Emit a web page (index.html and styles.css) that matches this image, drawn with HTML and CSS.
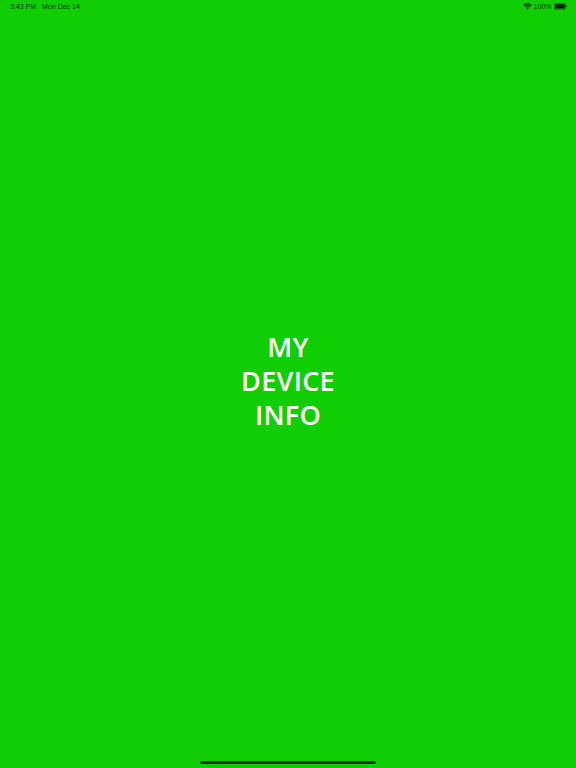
FILE: index.html
```html
<!DOCTYPE html>
<html lang="en">
<head>
<meta charset="utf-8">
<title>My Device Info</title>
<link rel="stylesheet" href="styles.css">
</head>
<body>
<div class="screen">
  <header class="status">
    <div class="status-left"><span>3:43 PM</span><span>Mon Dec 14</span></div>
    <div class="status-right">
      <svg class="wifi" viewBox="0 0 12 9" width="9" height="6.750"><path d="M6 9 4 6.800a3 3 0 0 1 4 0zM3.100 5.900 1.900 4.600a6 6 0 0 1 8.200 0L8.900 5.900a4.300 4.300 0 0 0-5.800 0zM1.100 3.800 0 2.500a8.800 8.800 0 0 1 12 0l-1.100 1.300a7.200 7.200 0 0 0-9.800 0z" fill="#0b3a06"/></svg>
      <span>100%</span>
      <svg class="battery" viewBox="0 0 14 7" width="13" height="6.500"><rect x=".3" y=".3" width="12" height="6.400" rx="1.500" fill="none" stroke="#0b3a06" stroke-width=".6"/><rect x="1" y="1" width="10.600" height="5" rx="1" fill="#06200a"/><rect x="12.800" y="2.300" width="1" height="2.400" rx=".5" fill="#0b3a06"/></svg>
    </div>
  </header>
  <main class="center">
    <h1 class="title">MY<br>DEVICE<br>INFO</h1>
  </main>
  <footer class="home"><div class="home-bar"></div></footer>
</div>
</body>
</html>
```
FILE: styles.css
```css
* { box-sizing: border-box; }
html, body { margin: 0; height: 100%; }
body { background: #10cd04; overflow: hidden; }
.screen {
  width: 576px;
  height: 768px;
  display: flex;
  flex-direction: column;
  background: #10cd04;
}
.status {
  height: 13px;
  padding: 0 9.500px 0 10px;
  display: flex;
  justify-content: space-between;
  align-items: center;
  font: 7px "Liberation Sans", Arial, sans-serif;
  color: #0b3a06;
}
.status-left { display: flex; gap: 6px; }
.status-right { display: flex; align-items: center; gap: 2px; }
.center {
  flex: 1;
  display: flex;
  align-items: center;
  justify-content: center;
  padding-bottom: 9px;
}
.title {
  margin: 0;
  text-align: center;
  font: 600 27px/34px "Open Sans", "Noto Sans", sans-serif;
  letter-spacing: .3px;
  color: #ffffff;
}
.home {
  height: 10px;
  display: flex;
  justify-content: center;
  padding-top: 3px;
}
.home-bar {
  width: 176px;
  height: 3px;
  border-radius: 2px;
  background: #0a3a0a;
}
```
